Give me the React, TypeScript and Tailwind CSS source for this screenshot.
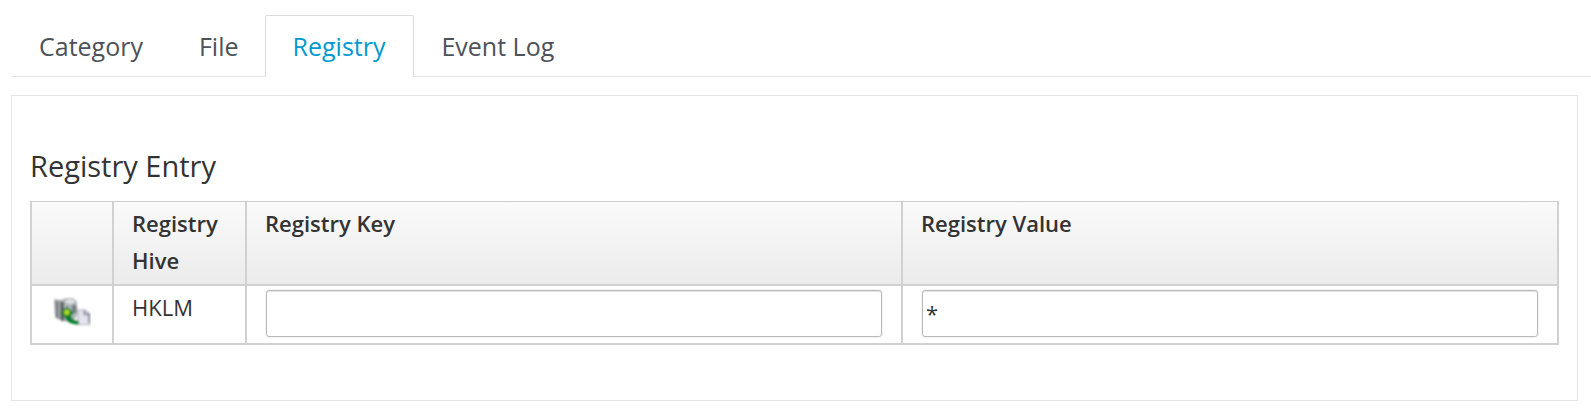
function ImportIcon() {
  return (
    <svg width="38" height="30" viewBox="0 0 38 30" aria-hidden="true">
      <defs>
        <filter id="soft" x="-10%" y="-10%" width="120%" height="120%">
          <feGaussianBlur stdDeviation="0.8" />
        </filter>
      </defs>
      <g filter="url(#soft)">
        <path d="M1 2 L8 3 L14 1 L20 1 L24 5 L24 18 L20 25 L9 24 L2 20 Z" fill="#b0b4b7" />
        <path d="M2 4 H9 V23 L3 21 Z" fill="#8a8e91" />
        <path d="M4 5 V21" stroke="#6e7376" strokeWidth="1.500" />
        <path d="M9.500 5 V24" stroke="#3f4548" strokeWidth="2.200" />
        <path d="M6 4 V21" stroke="#b7babd" strokeWidth="1" />
        <ellipse cx="17" cy="4.500" rx="5" ry="3" fill="#dfe1e5" stroke="#a9adb0" />
        <path d="M19 8 L23.500 8 L23.500 16 L19 16 Z" fill="#757b80" />
        <path d="M25 13 H32 L36.500 17 V27.500 H25 Z" fill="#e4e4ee" stroke="#aaacb3" strokeWidth="1.200" />
        <path d="M31.500 13.500 V17.500 H36 V26" fill="none" stroke="#777a80" strokeWidth="1.600" />
        <path d="M7 16 L14 9.500 L21 16 L18 18.500 C19 22 21 23.500 26 24 L26 27.500 C18 28 12 24 11 18.500 Z" fill="#06802e" />
        <circle cx="13.800" cy="15.300" r="2.700" fill="#b2dc20" />
      </g>
    </svg>
  );
}

const tabs = ["Category", "File", "Registry", "Event Log"];

function Tab({ label, active }: { label: string; active: boolean }) {
  return (
    <button
      className={
        active
          ? "-mr-[1px] -mb-[1px] -ml-[2px] h-[62px] rounded-t-[2px] border border-b-0 border-[#dbdcdc] bg-white pr-[28px] pb-[1px] pl-[27px] text-[#0099d3]"
          : "h-[61px] border border-transparent px-[27px] text-[#4d5258]"
      }
    >
      {label}
    </button>
  );
}

function Field({ value, label }: { value: string; label: string }) {
  return (
    <input
      aria-label={label}
      defaultValue={value}
      className="block h-[47px] w-full rounded-[3px] border border-[#bababa] bg-white px-[3px] pb-[2px] text-[22px] text-[#333] shadow-[inset_0_1px_1px_rgba(3,3,3,0.12),0_0_1px_1px_rgba(0,0,0,0.05)] outline-none"
    />
  );
}

export default function App() {
  return (
    <div className="h-[410px] overflow-hidden bg-white pl-[11px] font-['Open_Sans',sans-serif] text-[#333]">
      <nav className="flex h-[77px] items-start border-b border-[#e7e7e7] pt-[15px] text-[25px] leading-[40px]">
        {tabs.map((t) => (
          <Tab key={t} label={t} active={t === "Registry"} />
        ))}
      </nav>
      <main className="mt-[18px] mr-[13px] h-[306px] border border-[#e5e5e5] px-[18px] pt-[49px]">
        <h2 className="h-[56px] text-[29px] leading-[42px]">Registry Entry</h2>
        <table className="w-[1529px] table-fixed border-separate border-spacing-0 border-t border-l-2 border-t-[#cecece] border-l-[#d1d1d1] text-[22px] leading-[37px]">
          <colgroup>
            <col className="w-[82px]" />
            <col className="w-[133px]" />
            <col className="w-[656px]" />
            <col className="w-[656px]" />
          </colgroup>
          <thead>
            <tr className="h-[84px] bg-linear-to-b from-[#fafafa] to-[#ebebeb] text-left align-top">
              <th className="border-r-2 border-b-2 border-[#d1d1d1]" />
              {["Registry Hive", "Registry Key", "Registry Value"].map((h) => (
                <th key={h} className="border-r-2 border-b-2 border-[#d1d1d1] px-[18px] pt-[3px] font-semibold">
                  {h}
                </th>
              ))}
            </tr>
          </thead>
          <tbody>
            <tr className="h-[59px] align-top">
              <td className="border-r-2 border-b-2 border-[#d1d1d1] pt-[11px] pl-[21px]">
                <ImportIcon />
              </td>
              <td className="border-r-2 border-b-2 border-[#d1d1d1] px-[18px] pt-[3px]">HKLM</td>
              <td className="border-r-2 border-b-2 border-[#d1d1d1] px-[19px] pt-[4px]">
                <Field label="Registry Key" value="" />
              </td>
              <td className="border-r-2 border-b-2 border-[#d1d1d1] px-[19px] pt-[4px]">
                <Field label="Registry Value" value="*" />
              </td>
            </tr>
          </tbody>
        </table>
      </main>
    </div>
  );
}
